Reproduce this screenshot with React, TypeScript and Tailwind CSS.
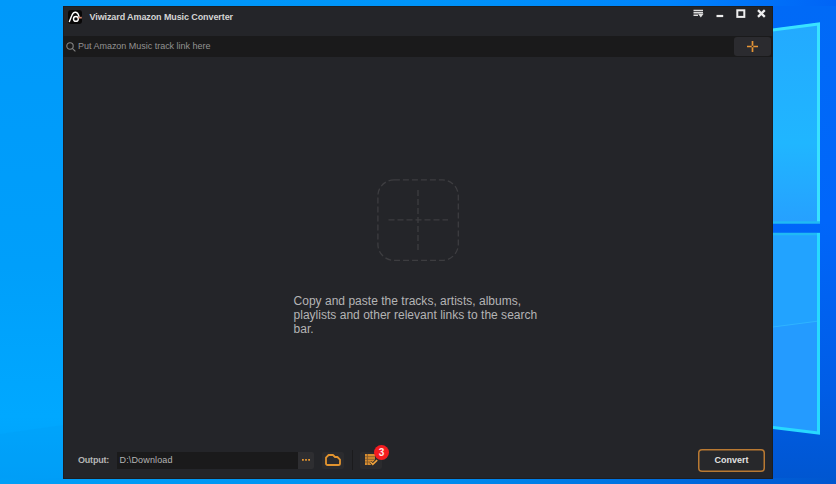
import React from "react";

function Wallpaper() {
  return (
    <svg className="absolute inset-0 h-full w-full" viewBox="0 0 836 484" preserveAspectRatio="none">
      <defs>
        <linearGradient id="sky" x1="0" y1="0" x2="1" y2="0">
          <stop offset="0" stopColor="#0099fa" />
          <stop offset="0.5" stopColor="#0094f8" />
          <stop offset="0.8" stopColor="#0084fb" />
          <stop offset="0.94" stopColor="#006df8" />
          <stop offset="1" stopColor="#0064f6" />
        </linearGradient>
        <linearGradient id="left" x1="0" y1="0" x2="0" y2="1">
          <stop offset="0" stopColor="#0099fa" />
          <stop offset="0.55" stopColor="#009ffa" />
          <stop offset="0.86" stopColor="#00a8ff" />
          <stop offset="1" stopColor="#009ff7" />
        </linearGradient>
        <linearGradient id="right" x1="0" y1="0" x2="0" y2="1">
          <stop offset="0" stopColor="#006af7" />
          <stop offset="0.45" stopColor="#0066fa" />
          <stop offset="0.8" stopColor="#005de6" />
          <stop offset="1" stopColor="#0056d0" />
        </linearGradient>
        <linearGradient id="floor" x1="0" y1="0" x2="1" y2="0">
          <stop offset="0" stopColor="#009ff7" />
          <stop offset="0.5" stopColor="#008ff0" />
          <stop offset="0.85" stopColor="#0066da" />
          <stop offset="1" stopColor="#0056d0" />
        </linearGradient>
        <linearGradient id="pane1" x1="0" y1="0" x2="0" y2="1">
          <stop offset="0" stopColor="#23aaff" />
          <stop offset="0.6" stopColor="#20b6ff" />
          <stop offset="1" stopColor="#26a0ff" />
        </linearGradient>
      </defs>
      <rect width="836" height="484" fill="url(#sky)" />
      <rect width="70" height="484" fill="url(#left)" />
      <path d="M0 434L70 424V484H0Z" fill="#009cf6" opacity=".3" />
      <rect x="765" y="6" width="71" height="478" fill="url(#right)" />
      <rect y="478" width="836" height="6" fill="url(#floor)" />
      <path d="M765 30L819 23V223H765Z" fill="url(#pane1)" />
      <path d="M765 31L818.5 24V223" fill="none" stroke="#39e2ff" strokeWidth="3" />
      <path d="M765 222.5H820" stroke="#20b9f5" strokeWidth="2.5" />
      <path d="M765 234H819V433L765 427Z" fill="#249bff" />
      <path d="M765 234H819V321L765 328Z" fill="#22a3ff" />
      <path d="M765 328L819 321" stroke="#2fb4ff" />
      <path d="M765 234H820" stroke="#20b9f5" strokeWidth="2.5" />
      <path d="M818.5 233V433L765 426.5" fill="none" stroke="#28d9ff" strokeWidth="3" />
    </svg>
  );
}

function TitleBar() {
  return (
    <header className="flex h-[30px] items-start">
      <svg className="ml-[5px] mt-1 h-[14px] w-[14px]" viewBox="0 0 14 14" fill="none">
        <rect width="14" height="14" rx="3" fill="#080707" />
        <path d="M1.4 11.6L3.6 6C4.5 3.4 5.8 2 7.8 2.2C9.8 2.4 10.4 4.2 11 6.4" stroke="#fff" strokeWidth="1.4" strokeLinecap="round" />
        <circle cx="7.9" cy="8.9" r="2.4" stroke="#fff" strokeWidth="1.4" />
        <path d="M10.4 7.8L13.8 7.6" stroke="#d5856b" strokeWidth="1.6" />
      </svg>
      <h1 className="ml-[7.5px] mt-[4px] whitespace-nowrap text-[9px] leading-[14px] font-bold tracking-[-0.1px] text-[#d4d4d4]">
        Viwizard Amazon Music Converter
      </h1>
      <svg className="ml-auto h-[16px] w-[84px]" viewBox="689 6 84 16" fill="none">
        <path d="M693.5 10.5H703M693.5 12.7H703M693.5 15.2H698" stroke="#dedede" strokeWidth="1.6" />
        <path d="M698 13.8H703.6L700.8 17.6Z" fill="#dedede" />
        <path d="M716.5 16H723.2" stroke="#eee" strokeWidth="2.2" />
        <rect x="737.3" y="10.3" width="7" height="6.6" stroke="#eee" strokeWidth="2" />
        <path d="M758 10.2L764.8 16.8M764.8 10.2L758 16.8" stroke="#eee" strokeWidth="2.3" />
      </svg>
    </header>
  );
}

function SearchBar() {
  return (
    <div className="flex h-[21px] items-center bg-[#1a1a1b]">
      <svg className="ml-[3px] h-[10px] w-[10px]" viewBox="0 0 10 10" fill="none" stroke="#848484" strokeWidth="1.1">
        <circle cx="4" cy="4" r="3.2" />
        <path d="M6.3 6.3L9.4 9.4" />
      </svg>
      <span className="ml-[2px] whitespace-nowrap text-[9px] tracking-[-0.02px] text-[#929292]">Put Amazon Music track link here</span>
      <button className="ml-auto mr-[2px] flex h-[19px] w-[37px] items-center justify-center rounded-[3px] bg-[#2b2b2f]">
        <svg className="h-[11px] w-[11px]" viewBox="0 0 11 11" stroke="#e69536" strokeWidth="1.7">
          <path d="M5.5 0V4.7M5.5 6.3V11M0 5.5H4.7M6.3 5.5H11" />
        </svg>
      </button>
    </div>
  );
}

function EmptyState() {
  return (
    <main className="flex grow flex-col">
      <svg className="ml-[313px] mt-[121px] h-[84px] w-[84px]" viewBox="0 0 84 84" fill="none" stroke="#3d3d40" strokeWidth="1.3">
        <rect x="1.9" y="1.9" width="80.4" height="80.4" rx="16" strokeDasharray="6 3" />
        <path d="M12.5 41.9H72M42 12V72" strokeDasharray="6 3" />
      </svg>
      <p className="ml-[230.5px] mt-[32px] w-[260px] text-[12px] leading-[14px] tracking-[0.02px] text-[#b4b4b5]">
        Copy and paste the tracks, artists, albums,
        <br />
        playlists and other relevant links to the search
        <br />
        bar.
      </p>
    </main>
  );
}

function Footer() {
  return (
    <footer className="flex h-[38px] items-center">
      <span className="ml-[15px] w-[39px] pt-[2px] whitespace-nowrap text-[9px] font-bold tracking-[-0.2px] text-[#b5b5b5]">Output:</span>
      <div className="flex h-[17px] w-[181px] items-center bg-[#1a1a1b] pl-[2.5px] pt-[2px] text-[9px] tracking-[0.15px] text-[#b4b4b4]">D:\Download</div>
      <button className="flex h-[17px] w-[16px] items-center justify-center rounded-r-[2px] bg-[#2e2e31]">
        <svg className="h-[2px] w-[8px]" viewBox="0 0 8 2" fill="#e3942f">
          <path d="M0 0H1.8V1.8H0ZM3.1 0H4.9V1.8H3.1ZM6.2 0H8V1.8H6.2Z" />
        </svg>
      </button>
      <button className="ml-[8px] flex h-[17px] w-[22px] items-center justify-center rounded-[2px] bg-[#2b2b2e]">
        <svg className="h-[12px] w-[16px]" viewBox="0 0 16 12" fill="none" stroke="#e3942f" strokeWidth="1.8" strokeLinejoin="round">
          <path d="M1 9.4V3.6L3.6 1H8L10 3H12.4L15 5.6V9.4Q15 11 13.3 11H2.7Q1 11 1 9.4Z" />
        </svg>
      </button>
      <div className="ml-[8px] h-[20px] w-px bg-[#1b1b1d]" />
      <button className="relative ml-[7px] flex h-[17px] w-[22px] items-center justify-center rounded-[2px] bg-[#2b2b2e]">
        <svg className="h-[12px] w-[14px]" viewBox="0 0 14 12" fill="none">
          <path d="M1 0H11V6L8 9L7 11H1Z" fill="#d98e30" />
          <path d="M3.4 0V11M1 2.7H11M1 5.3H11M1 8H8" stroke="#7a562c" strokeWidth=".8" />
          <path d="M6.5 8L8.7 10.3L13 6.2" stroke="#2b2b2e" strokeWidth="3" />
          <path d="M6.5 8L8.8 10.4L13.2 6.2" stroke="#eea13b" strokeWidth="1.7" />
        </svg>
        <span className="absolute left-[14px] top-[-7px] flex h-[15px] w-[15px] items-center justify-center rounded-full bg-[#f51c20] text-[10px] font-bold text-[#ffe5e5]">3</span>
      </button>
      <button className="ml-auto mr-[8px] flex h-[23px] w-[67px] items-center justify-center rounded-[4px] pt-[2px] shadow-[inset_0_0_0_1.5px_#b97932] bg-[#27282b] text-[9px] font-bold text-[#e2e2e2]">
        Convert
      </button>
    </footer>
  );
}

export default function App() {
  return (
    <div className="relative h-[484px] w-[836px] overflow-hidden font-['Liberation_Sans',Arial,sans-serif]">
      <Wallpaper />
      <div className="absolute left-[63px] top-[6px] flex h-[473px] w-[710px] flex-col bg-[#242529] shadow-[inset_0_0_0_1px_#1c1e22]">
        <TitleBar />
        <SearchBar />
        <EmptyState />
        <Footer />
      </div>
    </div>
  );
}
